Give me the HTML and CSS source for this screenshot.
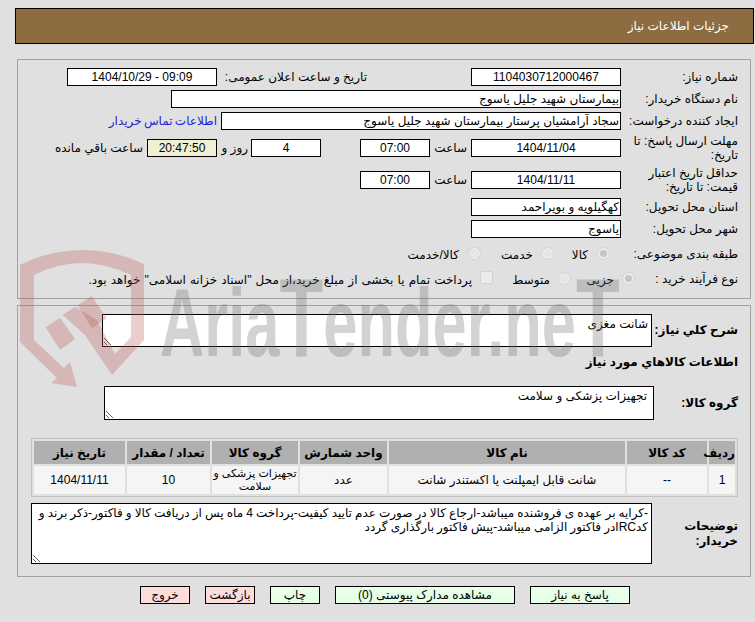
FILE: index.html
```html
<!DOCTYPE html>
<html lang="fa" dir="rtl">
<head>
<meta charset="utf-8">
<title>جزئیات اطلاعات نیاز</title>
<link rel="stylesheet" href="styles.css">
</head>
<body>
<header class="page-title"><span>جزئیات اطلاعات نیاز</span></header>

<section class="panel panel-top">
  <div class="row">
    <label class="lbl">شماره نیاز:</label>
    <input class="box w150 center" readonly value="1104030712000467">
    <span class="txt push-104">تاریخ و ساعت اعلان عمومی:</span>
    <input class="box w150 center" readonly value="09:09 - 1404/10/29">
  </div>
  <div class="row">
    <label class="lbl">نام دستگاه خریدار:</label>
    <input class="box w450" readonly value="بیمارستان شهید جلیل یاسوج">
  </div>
  <div class="row">
    <label class="lbl">ایجاد کننده درخواست:</label>
    <input class="box w400" readonly value="سجاد آرامشیان پرستار بیمارستان شهید جلیل یاسوج">
    <a class="link" href="#">اطلاعات تماس خریدار</a>
  </div>
  <div class="row tall">
    <label class="lbl">مهلت ارسال پاسخ: تا تاریخ:</label>
    <input class="box w150 center" readonly value="1404/11/04">
    <span class="txt hour">ساعت</span>
    <input class="box w70 center" readonly value="07:00">
    <input class="box w70 center days" readonly value="4">
    <span class="txt rooz">روز و</span>
    <input class="box w70 center remain" readonly value="20:47:50">
    <span class="txt left-note">ساعت باقي مانده</span>
  </div>
  <div class="row tall">
    <label class="lbl">حداقل تاریخ اعتبار قیمت: تا تاریخ:</label>
    <input class="box w150 center" readonly value="1404/11/11">
    <span class="txt hour">ساعت</span>
    <input class="box w70 center" readonly value="07:00">
  </div>
  <div class="row">
    <label class="lbl">استان محل تحویل:</label>
    <input class="box w150" readonly value="کهگیلویه و بویراحمد">
  </div>
  <div class="row">
    <label class="lbl">شهر محل تحویل:</label>
    <input class="box w150" readonly value="یاسوج">
  </div>
  <div class="row opt-row first-opt">
    <label class="lbl">طبقه بندی موضوعی:</label>
    <span class="radio on r-a"></span><span class="txt t-a">کالا</span>
    <span class="radio r-b"></span><span class="txt t-b">خدمت</span>
    <span class="radio r-c"></span><span class="txt t-c">کالا/خدمت</span>
  </div>
  <div class="row opt-row">
    <label class="lbl lbl-short">نوع فرآیند خرید :</label>
    <span class="radio on"></span><span class="txt t-d">جزیی</span>
    <span class="radio r-e"></span><span class="txt t-e">متوسط</span>
    <span class="check"></span><span class="txt t-f">پرداخت تمام یا بخشی از مبلغ خرید،از محل "اسناد خزانه اسلامی" خواهد بود.</span>
  </div>
</section>

<section class="panel panel-bottom">
  <div class="area-row">
    <label class="lbl-b">شرح کلي نیاز:</label>
    <textarea class="area a-sharh" readonly>شانت مغزی</textarea>
  </div>
  <h2 class="section-h">اطلاعات کالاهاي مورد نیاز</h2>
  <div class="area-row group-row">
    <label class="lbl-b">گروه کالا:</label>
    <textarea class="area a-group" readonly>تجهیزات پزشکی و سلامت</textarea>
  </div>
  <table class="items">
    <colgroup>
      <col class="c1"><col class="c2"><col class="c3"><col class="c4"><col class="c5"><col class="c6"><col class="c7">
    </colgroup>
    <thead>
      <tr><th>ردیف</th><th>کد کالا</th><th>نام کالا</th><th>واحد شمارش</th><th>گروه کالا</th><th>تعداد / مقدار</th><th>تاریخ نیاز</th></tr>
    </thead>
    <tbody>
      <tr><td>1</td><td>--</td><td>شانت قابل ایمپلنت یا اکستندر شانت</td><td>عدد</td><td class="nowrap">تجهیزات پزشکی و<br>سلامت</td><td>10</td><td>1404/11/11</td></tr>
    </tbody>
  </table>
  <div class="area-row notes-row">
    <label class="lbl-b">توضیحات خریدار:</label>
    <textarea class="area a-notes" readonly>-کرایه بر عهده ی فروشنده میباشد-ارجاع کالا در صورت عدم تایید کیفیت-پرداخت 4 ماه پس از دریافت کالا و فاکتور-ذکر برند و کدIRCدر فاکتور الزامی میباشد-پیش فاکتور بارگذاری گردد</textarea>
  </div>
</section>

<nav class="actions">
  <button class="btn ok w-100">پاسخ به نیاز</button>
  <button class="btn ok w-180">مشاهده مدارک پیوستی (0)</button>
  <button class="btn ok w-50">چاپ</button>
  <button class="btn bad w-50">بازگشت</button>
  <button class="btn bad w-50">خروج</button>
</nav>

<div class="watermark" aria-hidden="true">
  <svg class="wm-logo" viewBox="0 0 130 140" width="130" height="140">
    <path class="wm-red" d="M10 15 Q40 0 72 0 Q105 0 134 14 L134 90 L102 125 L75 85 L87 70 L105 104 L121 87 L121 25 Q95 13 72 13 Q48 13 24 25 L24 90 L54 118 L60 112 L67 137 L41 133 L47 128 L10 92 Z"/>
    <path class="wm-red" d="M35.700 77.300 L50 67.700 L65 89 L50 100 Z"/>
    <path class="wm-red" d="M52.700 65 L65 56.700 L87 70 L75 85 Z"/>
    <path class="wm-red" d="M67.700 55 L81.700 46 L96.700 68.300 L81.700 78.300 Z"/>
  </svg>
  <span class="wm-text">Aria<span class="wm-t">T</span>ender.ne<span class="wm-t">T</span></span>
</div>
</body>
</html>
```

FILE: styles.css
```css
* { box-sizing: border-box; }
html, body { margin: 0; padding: 0; }
body {
  width: 755px;
  height: 622px;
  overflow: hidden;
  position: relative;
  background: #e0e0e0;
  color: #000;
  font-family: "Liberation Sans", "DejaVu Sans", sans-serif;
  font-size: 12px;
}
input, textarea, button { font: inherit; color: #000; }

.page-title {
  height: 36px;
  margin: 8px 1px 0 15px;
  padding-right: 24px;
  display: flex;
  align-items: center;
  background: #8c6c40;
  border: 1px solid #000;
  color: #fff;
}

.panel {
  width: 734px;
  margin-right: 4px;
  margin-left: 17px;
  border: 1px solid #a0a0a0;
}
.panel-top { height: 240px; margin-top: 15px; padding: 8px 0 0 0; }
.panel-bottom { height: 272px; margin-top: 6px; padding: 8px 0 0 0; }

.row {
  display: flex;
  align-items: center;
  min-height: 18px;
  margin-bottom: 4px;
  padding-right: 12px;
}
.row.tall { height: 28px; }
.opt-row { height: 24px; margin-bottom: 0; }
.first-opt { height: 22px; margin-bottom: 2px; }
.opt-row .txt { padding-top: 4px; }
.opt-row .lbl { padding-top: 1px; }

.lbl { flex: none; width: 117px; padding-left: 4px; line-height: 14px; }
.lbl-short { width: 103px; }
.txt { flex: none; white-space: nowrap; }

.box {
  flex: none;
  height: 18px;
  padding: 0 1px;
  background: #fff;
  border: 1px solid #000;
  border-radius: 0;
  outline: none;
}
.center { text-align: center; }
.w150 { width: 150px; }
.w70 { width: 70px; }
.w400 { width: 400px; }
.w450 { width: 450px; }

.push-104 { margin-right: 104px; width: 150px; }
.link { margin-right: 4px; color: #2222dd; text-decoration: none; word-spacing: -1px; }
.hour { width: 41px; padding-right: 4px; }
.days { margin-right: 39px; }
.rooz { width: 34px; padding-right: 3px; }
.remain { background: #f0f0d2; }
.left-note { margin-right: 4px; }

.radio, .check {
  flex: none;
  display: block;
  width: 13px;
  height: 13px;
  background: #e6e6e6;
  border: 1px solid #d2d2d2;
  box-shadow: inset 0 0 0 1px #f0f0f0;
  border-radius: 50%;
  position: relative;
}
.radio.on::after {
  content: "";
  position: absolute;
  inset: 2px;
  border-radius: 50%;
  background: #c6c6c6;
}
.check { border-radius: 2px; background: #ececec; box-shadow: none; margin-bottom: 2px; }
.r-a { margin-right: 11px; }
.t-a { width: 26px; margin-right: 9px; }
.r-b { margin-right: 8px; }
.t-b { width: 40px; margin-right: 8px; }
.r-c { margin-right: 12px; }
.t-c { margin-right: 9px; }
.t-d { margin-right: 8px; width: 28px; }
.r-e { margin-right: 15px; }
.t-e { margin-right: 8px; width: 36px; }
.check { margin-right: 21px; }
.t-f { margin-right: 8px; word-spacing: 0.8px; }

.area-row { display: flex; align-items: center; padding-right: 12px; }
.lbl-b { flex: none; width: 86px; font-weight: bold; line-height: 15px; }
.area {
  flex: none;
  display: block;
  margin: 0;
  padding: 2px 3px;
  background: #fff;
  border: 1px solid #000;
  border-radius: 0;
  outline: none;
  resize: both;
}
.a-sharh { width: 550px; height: 33px; }
.a-group { width: 550px; height: 34px; padding-right: 6px; }
.a-notes { width: 621px; height: 61px; word-spacing: -0.25px; }
.group-row .lbl-b { width: 84px; }

.section-h {
  margin: 8px 12px 0 0;
  height: 31px;
  line-height: 14px;
  font-size: 12px;
  font-weight: bold;
}

.items {
  margin: 18px 12px 0 0;
  width: 707px;
  table-layout: fixed;
  border-collapse: separate;
  border-spacing: 2px;
  border: 1px solid #c4c4c4;
  background: #e0e0e0;
}
.c1 { width: 26px; } .c2 { width: 80px; } .c3 { width: 236px; } .c4 { width: 87px; }
.c5 { width: 86px; } .c6 { width: 83px; } .c7 { width: 91px; }
.items th {
  height: 23px;
  padding: 0;
  background: #b0b0b0;
  font-weight: bold;
  text-align: center;
}
.items td {
  height: 28px;
  padding: 0;
  background: #f5f5f5;
  text-align: center;
  line-height: 13px;
}
.items td.nowrap { white-space: nowrap; font-size: 11px; }

.notes-row { margin-top: 6px; }

.actions {
  display: flex;
  gap: 15px;
  margin-top: 9px;
  padding-right: 125px;
}
.btn {
  flex: none;
  height: 18px;
  padding: 0;
  border: 1px solid #000;
  border-radius: 0;
}
.ok { background: #e6ffe6; }
.bad { background: #ffdcdc; }
.w-100 { width: 100px; }
.w-180 { width: 180px; }
.w-50 { width: 50px; }

.watermark {
  position: absolute;
  left: 0;
  top: 0;
  width: 755px;
  height: 622px;
  pointer-events: none;
  direction: ltr;
}
.wm-logo { position: absolute; left: 10px; top: 250px; overflow: visible; }
.wm-red { fill: rgba(190, 90, 90, 0.3); }
.wm-text {
  position: absolute;
  left: 160px;
  top: 270px;
  font-family: "Liberation Sans", sans-serif;
  font-weight: bold;
  font-size: 96px;
  line-height: 96px;
  white-space: nowrap;
  color: rgba(110, 110, 110, 0.3);
  transform: scaleX(0.64);
  transform-origin: left top;
}
.wm-t { font-size: 112px; line-height: 96px; }
```
